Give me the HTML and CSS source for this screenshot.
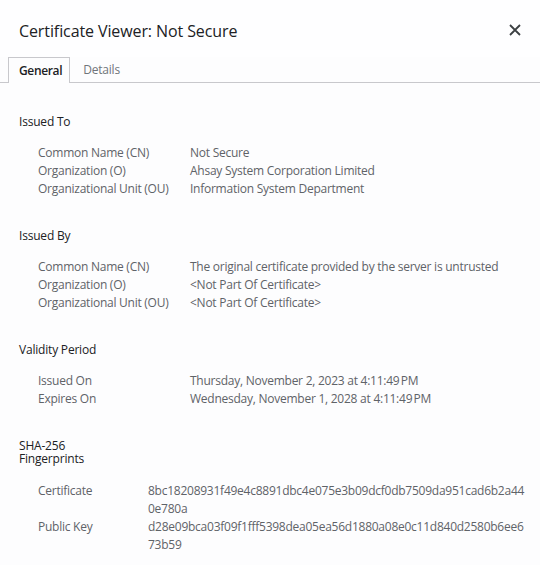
FILE: index.html
```html
<!DOCTYPE html>
<html>
<head>
<meta charset="utf-8">
<link rel="stylesheet" href="styles.css">
</head>
<body>
<div class="dialog">
  <div class="header">
    <div class="title">Certificate Viewer: Not Secure</div>
    <button class="close" aria-label="Close">
      <svg width="12" height="12" viewBox="0 0 12 12"><path d="M1 1L11 11M11 1L1 11" stroke="#3c4043" stroke-width="1.8" fill="none"/></svg>
    </button>
  </div>
  <div class="tabs">
    <div class="tab active">General</div>
    <div class="tab">Details</div>
  </div>
  <div class="content">
    <section class="section">
      <div class="heading">Issued To</div>
      <div class="rows">
        <div class="label">Common Name (CN)</div><div class="value">Not Secure</div>
        <div class="label">Organization (O)</div><div class="value">Ahsay System Corporation Limited</div>
        <div class="label">Organizational Unit (OU)</div><div class="value">Information System Department</div>
      </div>
    </section>
    <section class="section">
      <div class="heading">Issued By</div>
      <div class="rows">
        <div class="label">Common Name (CN)</div><div class="value">The original certificate provided by the server is untrusted</div>
        <div class="label">Organization (O)</div><div class="value">&lt;Not Part Of Certificate&gt;</div>
        <div class="label">Organizational Unit (OU)</div><div class="value">&lt;Not Part Of Certificate&gt;</div>
      </div>
    </section>
    <section class="section">
      <div class="heading">Validity Period</div>
      <div class="rows">
        <div class="label">Issued On</div><div class="value">Thursday, November 2, 2023 at 4:11:49&#8239;PM</div>
        <div class="label">Expires On</div><div class="value">Wednesday, November 1, 2028 at 4:11:49&#8239;PM</div>
      </div>
    </section>
    <section class="section">
      <div class="heading narrow"><div>SHA-256</div><div>Fingerprints</div></div>
      <div class="rows fp">
        <div class="label">Certificate</div><div class="value">8bc18208931f49e4c8891dbc4e075e3b09dcf0db7509da951cad6b2a44<br>0e780a</div>
        <div class="label">Public Key</div><div class="value">d28e09bca03f09f1fff5398dea05ea56d1880a08e0c11d840d2580b6ee6<br>73b59</div>
      </div>
    </section>
  </div>
</div>
</body>
</html>
```
FILE: styles.css
```css
html, body {
  margin: 0;
  padding: 0;
  background: #fdfdfe;
}
body {
  font-family: "Open Sans", "Noto Sans", sans-serif;
  color: #202124;
  width: 540px;
  height: 565px;
  overflow: hidden;
}
.dialog {
  display: flex;
  flex-direction: column;
}
.header {
  display: flex;
  align-items: center;
  justify-content: space-between;
  height: 57px;
  padding: 0 19px 0 19px;
  box-sizing: border-box;
  background: #fefeff;
}
.title {
  font-size: 16px;
  letter-spacing: -0.1px;
  color: #202124;
  margin-top: 5px;
}
.close {
  border: none;
  background: none;
  padding: 0;
  width: 12px;
  height: 12px;
  display: flex;
  margin-top: 2px;
}
.tabs {
  display: flex;
  padding-left: 8px;
  border-bottom: 1px solid #c8c8cc;
  height: 25px;
  box-sizing: content-box;
}
.tab {
  font-size: 12px;
  color: #70757a;
  padding: 0 11px 0 13px;
  line-height: 26px;
  letter-spacing: -0.2px;
}
.tab.active {
  color: #202124;
  font-weight: 600;
  border: 1px solid #c8c8cc;
  border-bottom: none;
  background: #fdfdfe;
  margin-bottom: -1px;
  line-height: 25px;
  padding: 0 7px 1px 10px;
  letter-spacing: -0.35px;
}
.content {
  padding: 32px 20px 0 19px;
  display: flex;
  flex-direction: column;
  gap: 31px;
}
.heading {
  font-size: 12px;
  line-height: 14px;
  color: #202124;
  letter-spacing: -0.2px;
}
.heading.narrow div {
  line-height: 13px;
  height: 13px;
  overflow: visible;
}
.heading.narrow {
  padding-bottom: 2px;
}
.rows {
  display: grid;
  grid-template-columns: 152px 1fr;
  margin-top: 15px;
  padding-left: 19px;
  font-size: 12px;
  line-height: 18px;
  color: #5f6368;
  letter-spacing: -0.25px;
}
.rows.fp {
  grid-template-columns: 110px 1fr;
}
.value {
  color: #5f6368;
}
```
